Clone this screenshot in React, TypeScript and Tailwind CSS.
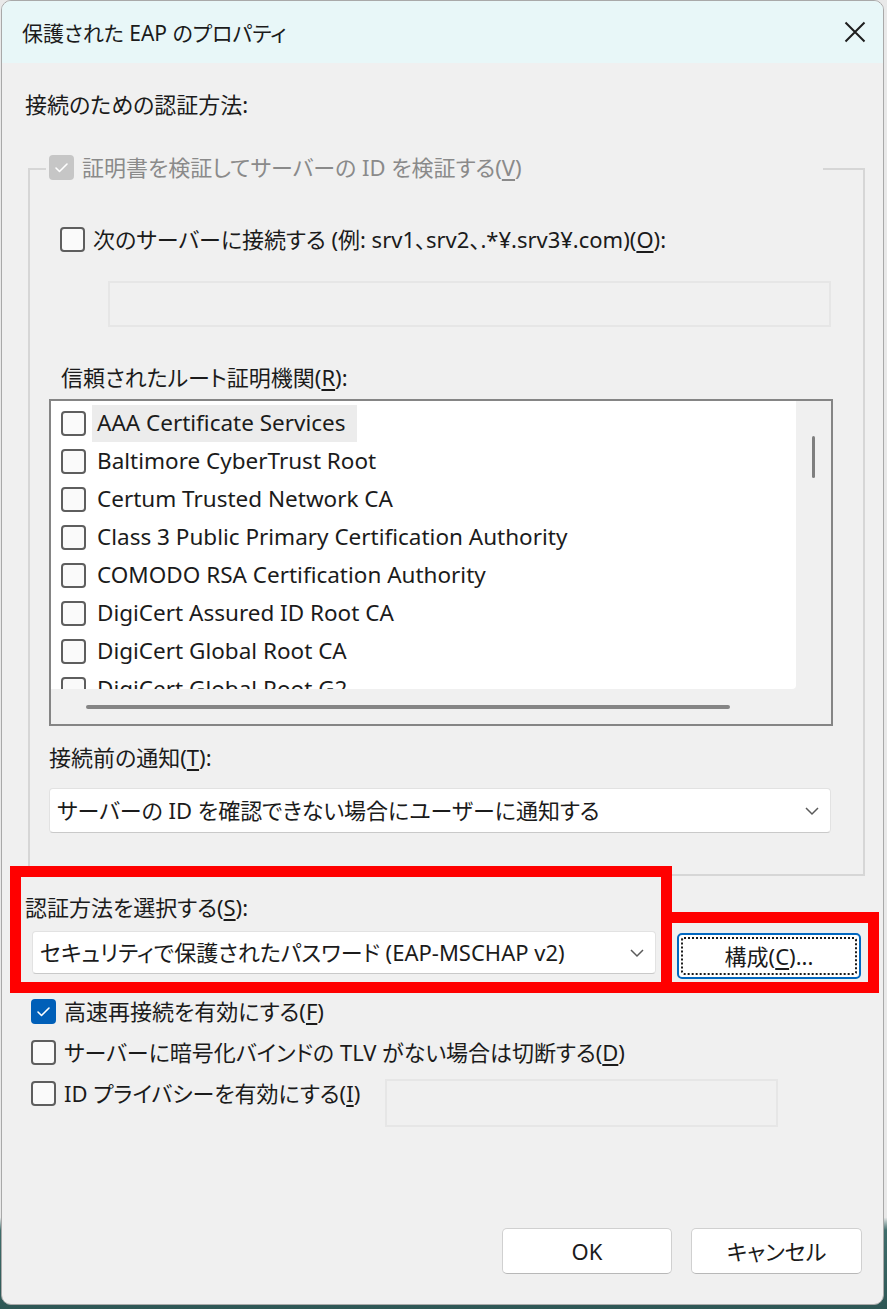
const items = [
  "AAA Certificate Services",
  "Baltimore CyberTrust Root",
  "Certum Trusted Network CA",
  "Class 3 Public Primary Certification Authority",
  "COMODO RSA Certification Authority",
  "DigiCert Assured ID Root CA",
  "DigiCert Global Root CA",
  "DigiCert Global Root G2",
];

function Check({ checked = false, disabled = false }: { checked?: boolean; disabled?: boolean }) {
  if (checked) {
    return (
      <div
        className={
          "w-[25px] h-[25px] shrink-0 rounded-[4px] flex items-center justify-center " +
          (disabled ? "bg-[#c6c6c6]" : "bg-[#005fb8]")
        }
      >
        <svg width="25" height="25" viewBox="0 0 25 25">
          <path d="M7 13 L10.5 16.5 L18 9" fill="none" stroke="white" strokeWidth="1.6" strokeLinecap="round" strokeLinejoin="round" />
        </svg>
      </div>
    );
  }
  return <div className="w-[25px] h-[25px] shrink-0 rounded-[4px] border-2 border-[#5e5e5e] bg-[#fafafa]" />;
}

function Chevron() {
  return (
    <svg width="16" height="10" viewBox="0 0 16 10">
      <path d="M2 2 L8 8 L14 2" fill="none" stroke="#5a5a5a" strokeWidth="1.5" />
    </svg>
  );
}

function U({ c }: { c: string }) {
  return <span className="underline underline-offset-[3px] decoration-[1.5px]">{c}</span>;
}

export default function App() {
  return (
    <div className="relative w-[887px] h-[1309px] overflow-hidden bg-[linear-gradient(to_bottom,#e9e9e9_0%,#e9e9e9_93%,#3f6d6b_94%,#2e5755_100%)] font-['Noto_Sans','Noto_Sans_CJK_JP',sans-serif] text-[#1b1b1b] [font-feature-settings:'palt']">
      <div className="ml-[1px] w-[883px] h-[1305px] bg-[#f0f0f0] rounded-[10px] border border-[#a9a9a9] overflow-hidden flex flex-col">
        {/* title bar */}
        <div className="h-[62px] shrink-0 bg-[#e8f7f8] flex items-center justify-between pl-[20px] pr-[17px]">
          <span className="text-[21px] leading-[30px] mt-[2px]">保護された EAP のプロパティ</span>
          <svg width="22" height="22" viewBox="0 0 22 22">
            <path d="M1.5 1.5 L20.5 20.5 M20.5 1.5 L1.5 20.5" stroke="#1e1e1e" strokeWidth="2" />
          </svg>
        </div>

        <div className="mt-[27px] ml-[23px] h-[28px] leading-[28px] text-[22px]">接続のための認証方法:</div>

        {/* group box */}
        <div className="relative mt-[50px] ml-[26px] w-[837px] h-[708px] shrink-0 border-2 border-[#d6d6d6] flex flex-col">
          <div className="absolute top-[-16px] left-[16px] w-[777px] h-[26px] bg-[#f0f0f0] flex items-center gap-[8px] pl-[3px] text-[#8a8a8a] text-[22px]">
            <Check checked disabled />
            <span>
              証明書を検証してサーバーの ID を検証する(<U c="V" />)
            </span>
          </div>

          <div className="mt-[54px] ml-[30px] h-[30px] flex items-center gap-[8px] text-[22px]">
            <Check />
            <span>
              次のサーバーに接続する (例: srv1、srv2、.*¥.srv3¥.com)(<U c="O" />):
            </span>
          </div>

          <div className="mt-[27px] ml-[78px] w-[723px] h-[46px] border-2 border-[#e6e6e6] bg-[#f0f0f0]" />

          <div className="mt-[36px] ml-[31px] h-[28px] leading-[28px] text-[22px]">
            信頼されたルート証明機関(<U c="R" />):
          </div>

          {/* list box */}
          <div className="mt-[8px] ml-[19px] w-[784px] h-[327px] border-2 border-[#858585] flex flex-col">
            <div className="flex h-[288px]">
              <div className="w-[745px] h-[288px] bg-white overflow-hidden pt-[3px] rounded-br-[4px]">
                {items.map((t, i) => (
                  <div key={t} className="h-[38px] flex items-center pl-[10px]">
                    <Check />
                    <span
                      className={
                        "ml-[6px] h-[37px] flex items-center px-[5px] text-[22.5px] whitespace-nowrap " +
                        (i === 0 ? "bg-[#ececec] pr-[11px]" : "")
                      }
                    >
                      {t}
                    </span>
                  </div>
                ))}
              </div>
              <div className="flex-1 bg-[#f0f0f0] flex justify-center pt-[35px]">
                <div className="w-[3px] h-[42px] rounded-full bg-[#7f7f7f]" />
              </div>
            </div>
            <div className="flex-1 bg-[#f0f0f0] flex items-center pl-[35px]">
              <div className="w-[644px] h-[4px] rounded-full bg-[#858585]" />
            </div>
          </div>

          <div className="mt-[17px] ml-[19px] h-[28px] leading-[28px] text-[22px]">
            接続前の通知(<U c="T" />):
          </div>

          <div className="mt-[17px] ml-[19px] w-[782px] h-[45px] bg-white rounded-[4px] border border-[#e2e2e2] border-b-[#c9c9c9] flex items-center justify-between pl-[7px] pr-[10px] text-[22px]">
            <span>サーバーの ID を確認できない場合にユーザーに通知する</span>
            <Chevron />
          </div>
        </div>

        <div className="mt-[17px] ml-[23px] h-[28px] leading-[28px] text-[22px]">
          認証方法を選択する(<U c="S" />):
        </div>

        <div className="mt-[10px] ml-[30px] flex items-start">
          <div className="w-[624px] h-[43px] bg-white rounded-[4px] border border-[#e2e2e2] border-b-[#c9c9c9] flex items-center justify-between pl-[7px] pr-[10px] text-[22px]">
            <span>セキュリティで保護されたパスワード (EAP-MSCHAP v2)</span>
            <Chevron />
          </div>
          <div className="ml-[21px] mt-[2px] w-[184px] h-[46px] bg-white rounded-[5px] border-2 border-[#0067c0] p-[2px]">
            <div className="w-full h-full border-2 border-dotted border-[#1a1a1a] rounded-[3px] flex items-center justify-center text-[22px]">
              <span>
                構成(<U c="C" />)...
              </span>
            </div>
          </div>
        </div>

        <div className="mt-[12px] ml-[29px] flex flex-col text-[22px]">
          <div className="h-[41px] flex items-center gap-[8px]">
            <Check checked />
            <span>
              高速再接続を有効にする(<U c="F" />)
            </span>
          </div>
          <div className="h-[41px] flex items-center gap-[8px]">
            <Check />
            <span>
              サーバーに暗号化バインドの TLV がない場合は切断する(<U c="D" />)
            </span>
          </div>
          <div className="flex items-start">
            <div className="w-[354px] h-[41px] flex items-center gap-[8px]">
              <Check />
              <span>
                ID プライバシーを有効にする(<U c="I" />)
              </span>
            </div>
            <div className="mt-[6px] w-[393px] h-[48px] border-2 border-[#e6e6e6] bg-[#f0f0f0]" />
          </div>
        </div>

        <div className="mt-auto mb-[30px] mr-[21px] flex justify-end gap-[19px] text-[22px]">
          <button className="w-[170px] h-[46px] bg-white rounded-[5px] border border-[#d0d0d0] border-b-[#b8b8b8]">OK</button>
          <button className="w-[171px] h-[46px] bg-white rounded-[5px] border border-[#d0d0d0] border-b-[#b8b8b8]">キャンセル</button>
        </div>
      </div>

      {/* red annotation frames */}
      <div className="absolute left-[10px] top-[866px] w-[662px] h-[127px] border-[11px] border-[#ff0000]" />
      <div className="absolute left-[661px] top-[912px] w-[218px] h-[81px] border-[11px] border-[#ff0000]" />
    </div>
  );
}
